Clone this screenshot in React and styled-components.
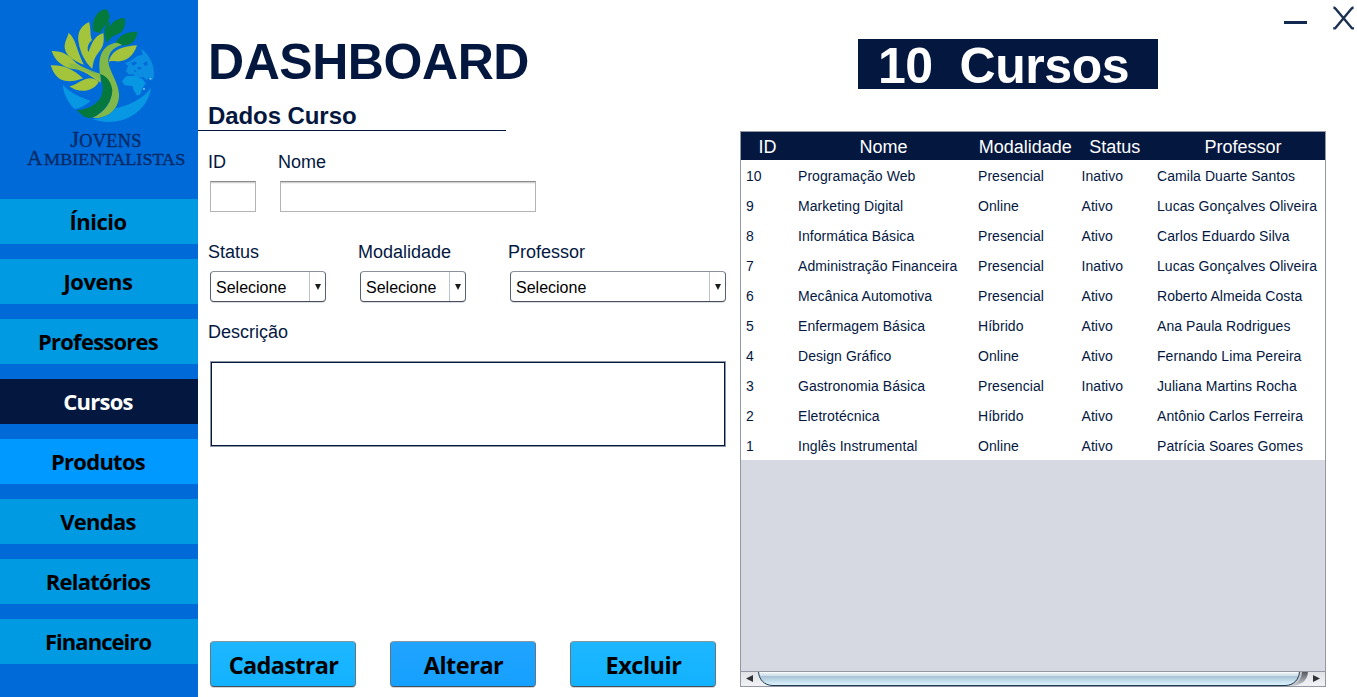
import React from 'react';
import styled, { createGlobalStyle, css } from 'styled-components';

const navy = '#04183f';
const arial = '"Liberation Sans", Arial, sans-serif';
const humanist = '"Open Sans", "Segoe UI", sans-serif';

const GlobalStyle = createGlobalStyle`
  *, *::before, *::after { box-sizing: border-box; }
  body { margin: 0; background: #fff; font-family: ${arial}; color: ${navy}; }
`;

const Window = styled.div`
  display: flex;
  width: 1357px;
  height: 697px;
  overflow: hidden;
  background: #fff;
`;

/* ---------- sidebar ---------- */
const Sidebar = styled.aside`
  width: 198px;
  flex: none;
  background: #006ad9;
`;

const LogoArt = styled.svg`
  display: block;
  width: 198px;
  height: 180px;
  margin-bottom: 19px;
`;

const Nav = styled.nav`
  display: flex;
  flex-direction: column;
  gap: 15px;
`;

const NavItem = styled.a`
  display: flex;
  align-items: center;
  justify-content: center;
  height: 45px;
  padding: 0 2px 2px 0;
  background: ${(p) => p.$bg || '#009ae3'};
  color: ${(p) => (p.$active ? '#fff' : '#000')};
  font: 700 22px/30px ${humanist};
  letter-spacing: ${(p) => p.$spacing ?? -0.75}px;
`;

/* ---------- form ---------- */
const FormPanel = styled.main`
  display: flex;
  flex-direction: column;
  width: 542px;
  flex: none;
  padding-bottom: 10px;
`;

const Title = styled.h1`
  margin: 33px 0 0 10px;
  font-size: 50px;
  line-height: 58px;
  font-weight: 700;
  letter-spacing: -0.45px;
`;

const SectionTitle = styled.h2`
  width: 308px;
  height: 31px;
  margin: 9px 0 0;
  padding: 2px 0 0 10px;
  border-bottom: 1px solid ${navy};
  font-size: 24px;
  line-height: 27px;
  font-weight: 700;
  letter-spacing: -0.08px;
`;

const FieldRow = styled.div`
  display: flex;
  margin: ${(p) => p.$top}px 0 0 10px;
`;

const Field = styled.div`
  display: flex;
  flex-direction: column;
  width: ${(p) => p.$width}px;
  flex: none;
`;

const Label = styled.label`
  height: 20px;
  margin-bottom: ${(p) => p.$gap || 9}px;
  font-size: 18px;
  line-height: 20px;
`;

const TextInput = styled.input`
  width: ${(p) => p.$width}px;
  height: 31px;
  margin: 0 0 0 2px;
  padding: 0 6px;
  border: 1px solid #b4b4b4;
  border-top-color: #8b8b8b;
  box-shadow: inset 0 1px 0 #d0d0d0, inset 0 2px 0 #f1f1f1;
  background: #fff;
  font: 16px ${arial};
  outline: none;
`;

const SelectBox = styled.div`
  display: flex;
  width: ${(p) => p.$width}px;
  height: 31px;
  margin-left: 2px;
  border: 1px solid #596171;
  border-top-color: #8b909b;
  border-bottom-color: #46505f;
  border-radius: 4px;
  box-shadow: 0 1px 0 #dcdcde;
  color: #000;
  font-size: 16px;
  line-height: 31px;
`;

const SelectValue = styled.span`
  flex: 1;
  padding-left: 5px;
`;

const SelectArrow = styled.span`
  display: flex;
  justify-content: center;
  width: 16px;
  padding: 12px 0 0 0;
  border-left: 1px solid #bcc4cb;
  border-radius: 0 3px 3px 0;

  &::before {
    content: '';
    width: 0;
    height: 0;
    border: 3.5px solid transparent;
    border-top: 6px solid #1b1b1b;
    border-bottom: 0;
  }
`;

const TextArea = styled.textarea`
  display: block;
  width: 516px;
  height: 86px;
  margin: 0 0 0 2px;
  padding: 4px;
  resize: none;
  outline: none;
  border: 1px solid #8f96a5;
  border-radius: 0;
  box-shadow: inset 0 0 0 1px ${navy};
  background: #fff;
  font: 16px ${arial};
`;

const Actions = styled.div`
  display: flex;
  gap: 34px;
  margin: auto 0 0 12px;
`;

const ActionButton = styled.button`
  width: 146px;
  height: 46px;
  padding: 1px 0 0 1px;
  border: 1px solid #5f7787;
  border-top-color: #8298a5;
  border-bottom-color: #43525d;
  border-radius: 4px;
  box-shadow: 0 1px 0 #d5d5d8;
  background: ${(p) =>
    p.$hover
      ? 'linear-gradient(#20a4ff, #16a0ff)'
      : 'linear-gradient(#1db7ff, #13b2ff)'};
  color: #000;
  font: 700 23.5px/32px ${humanist};
  letter-spacing: ${(p) => p.$spacing ?? -0.7}px;
`;

/* ---------- right side ---------- */
const ListPanel = styled.section`
  display: flex;
  flex-direction: column;
  flex: 1;
`;

const WindowControls = styled.div`
  display: flex;
  justify-content: flex-end;
  height: 39px;
`;

const ControlsArt = styled.svg`
  width: 77px;
  height: 39px;
`;

const CountBanner = styled.div`
  width: 300px;
  height: 50px;
  margin-left: 118px;
  padding-left: 20px;
  background: ${navy};
  color: #fff;
  font-size: 50px;
  line-height: 54px;
  font-weight: 700;
  letter-spacing: -0.45px;
  white-space: pre;
`;

const TableFrame = styled.div`
  display: flex;
  flex-direction: column;
  width: 586px;
  height: 556px;
  margin-top: 42px;
  border: 1px solid #9396a3;
  background: #d6d9e1;
  overflow: hidden;
`;

const columns = css`
  display: grid;
  grid-template-columns: 52px 180px 103.5px 75.5px 181px;
  width: 592px;
`;

const HeaderRow = styled.div`
  ${columns}
  height: 28px;
  padding-left: 0.5px;
  background: ${navy};
  color: #fff;
  font-size: 18px;
  line-height: 30px;
  text-align: center;
`;

const BodyRow = styled.div`
  ${columns}
  height: 30px;
  background: #fff;
  font-size: 14px;
  line-height: 33px;
  letter-spacing: 0.06px;
`;

const Cell = styled.span`
  padding-left: 5px;
  white-space: nowrap;
`;

const ScrollArt = styled.svg`
  display: block;
  width: 584px;
  height: 15px;
  margin-top: auto;
  flex: none;
`;

const menu = [
  { label: 'Ínicio', spacing: -0.5 },
  { label: 'Jovens', spacing: -0.45 },
  { label: 'Professores' },
  { label: 'Cursos', active: true, bg: navy },
  { label: 'Produtos', bg: '#0099ff' },
  { label: 'Vendas' },
  { label: 'Relatórios' },
  { label: 'Financeiro', spacing: -0.95 },
];

const courses = [
  ['10', 'Programação Web', 'Presencial', 'Inativo', 'Camila Duarte Santos'],
  ['9', 'Marketing Digital', 'Online', 'Ativo', 'Lucas Gonçalves Oliveira'],
  ['8', 'Informática Básica', 'Presencial', 'Ativo', 'Carlos Eduardo Silva'],
  ['7', 'Administração Financeira', 'Presencial', 'Inativo', 'Lucas Gonçalves Oliveira'],
  ['6', 'Mecânica Automotiva', 'Presencial', 'Ativo', 'Roberto Almeida Costa'],
  ['5', 'Enfermagem Básica', 'Híbrido', 'Ativo', 'Ana Paula Rodrigues'],
  ['4', 'Design Gráfico', 'Online', 'Ativo', 'Fernando Lima Pereira'],
  ['3', 'Gastronomia Básica', 'Presencial', 'Inativo', 'Juliana Martins Rocha'],
  ['2', 'Eletrotécnica', 'Híbrido', 'Ativo', 'Antônio Carlos Ferreira'],
  ['1', 'Inglês Instrumental', 'Online', 'Ativo', 'Patrícia Soares Gomes'],
];

function Logo() {
  return (
    <LogoArt viewBox="0 0 594 540">
      {/* globe */}
      <path fill="#0797e3" d="M188 254 C214 282 248 294 272 302 C250 322 232 326 224 327 C202 306 191 280 188 254 Z" />
      <path fill="#0797e3" d="M453 264 C445 322 392 366 326 366 C306 366 290 362 278 358 C306 356 328 346 346 325 C392 316 430 294 453 264 Z" />
      <path fill="#0b8de2" d="M424 146 C450 166 464 196 462 230 L456 242 L449 232 L440 240 L430 231 L412 234 L398 222 L388 224 L378 214 L384 198 L376 190 L396 180 L412 168 L428 164 Z" />
      <path fill="#0797e3" d="M378 229 L404 227 L428 238 L437 250 L428 264 L420 284 L410 286 L400 268 L398 258 L374 256 L366 244 Z" />
      <path fill="#006ad9" d="M392 190 L406 184 L411 190 L400 198 Z M412 202 L422 200 L424 208 L414 208 Z M430 190 L440 184 L444 194 L434 198 Z M400 210 L410 212 L406 217 Z" />
      <circle cx="451" cy="236" r="3" fill="#7bcaf2" />
      <circle cx="432" cy="267" r="3" fill="#7bcaf2" />
      {/* dark leaves */}
      <path fill="#047a3c" d="M280 93 C274 60 290 32 317 27 C331 39 332 56 322 70 C312 79 305 87 301 100 Z" />
      <path fill="#047a3c" d="M314 88 C315 76 322 68 330 65 L328 82 C336 66 351 55 374 54 C378 78 370 96 353 103 C337 108 326 119 321 130 C315 116 312 100 314 88 Z" />
      <path fill="#047a3c" d="M347 128 C358 105 382 94 412 95 C410 120 394 135 375 136 C366 136 356 131 347 128 Z" />
      {/* light leaves */}
      <path fill="#a4c43c" d="M236 128 C230 97 244 76 267 66 C274 87 269 107 276 120 C263 132 261 144 265 157 C274 138 278 109 310 99 C314 127 309 143 295 158 C282 174 279 190 277 207 C255 186 241 158 236 128 Z" />
      <path fill="#a4c43c" d="M206 98 C230 120 226 143 252 194 C224 184 197 168 194 143 C193 126 201 117 206 98 Z" />
      <path fill="#a4c43c" d="M155 153 C184 152 207 165 220 181 C233 196 254 204 277 217 L301 222 L302 248 C276 232 250 209 220 207 C190 202 164 183 155 153 Z" />
      <path fill="#a4c43c" d="M152 196 C184 194 216 203 249 235 C223 246 198 246 181 238 C166 229 158 213 152 196 Z" />
      <path fill="#a4c43c" d="M208 259 C228 257 242 238 270 235 C283 235 290 239 296 246 C282 273 239 283 208 259 Z" />
      <path fill="#a4c43c" d="M327 185 C332 159 354 139 411 136 C400 171 376 187 347 184 C338 183 333 182 327 185 Z" />
      {/* trunk */}
      <path fill="#80b84a" d="M300 222 C293 169 306 136 348 128 C356 129 362 132 366 135 C336 143 321 165 326 192 C332 219 355 249 357 281 C360 325 323 357 278 354 C319 332 340 301 334 264 C327 239 316 229 300 222 Z" />
      <path fill="#80b84a" d="M205 190 C240 193 270 212 300 221 L302 244 C278 224 247 207 213 205 Z" opacity=".75" />
      <path fill="#04783d" d="M301 222 C322 229 335 248 337 272 C334 310 302 346 270 354 C253 353 241 343 231 331 C278 326 306 302 308 270 C309 251 303 238 301 222 Z" />
      <g fill="#052b68" stroke="#052b68" strokeWidth="1.2" fontFamily="'Liberation Serif', 'Times New Roman', serif">
        <text y="441" fontSize="55">
          <tspan x="211" fontSize="68">J</tspan>
          <tspan x="238" textLength="186" lengthAdjust="spacing">OVENS</tspan>
        </text>
        <text y="495" fontSize="52">
          <tspan x="81" fontSize="64">A</tspan>
          <tspan x="132" textLength="424" lengthAdjust="spacingAndGlyphs">MBIENTALISTAS</tspan>
        </text>
      </g>
    </LogoArt>
  );
}

function ScrollBar() {
  return (
    <ScrollArt viewBox="0 0 584 15">
      <defs>
        <linearGradient id="thumb" x1="0" y1="0" x2="0" y2="1">
          <stop offset="0" stopColor="#f4f8fb" />
          <stop offset=".3" stopColor="#d6e3ed" />
          <stop offset=".38" stopColor="#a9c2d5" />
          <stop offset=".7" stopColor="#c6dfed" />
          <stop offset="1" stopColor="#e0f5ff" />
        </linearGradient>
        <linearGradient id="track" x1="0" y1="0" x2="0" y2="1">
          <stop offset="0" stopColor="#dfe1e5" />
          <stop offset="1" stopColor="#f1f2f5" />
        </linearGradient>
        <linearGradient id="shade" x1="0" y1="0" x2="0" y2="1">
          <stop offset="0" stopColor="#4d5157" />
          <stop offset="1" stopColor="#cfd1d5" />
        </linearGradient>
      </defs>
      <rect width="584" height="15" fill="url(#track)" />
      <path d="M552 0H567C567 8 562 14 551 15H545Z" fill="url(#shade)" />
      <path d="M555 0H561C561 8 556 14 547 15H540Z" fill="#c7cbd2" />
      <path d="M17.5 0C17.5 8 23 14.5 32 14.5H544C553 14.5 558.5 8 558.5 0Z" fill="url(#thumb)" stroke="#213b50" />
      <path d="M0 .5H584" stroke="#9598a4" />
      <path d="M19 1.5H557" stroke="#f8fbfd" />
      <path d="M5 7.5L12 4V11Z" fill="#303236" />
      <path d="M579 7.5L572 4V11Z" fill="#303236" />
    </ScrollArt>
  );
}

function Select({ label, width, fieldWidth }) {
  return (
    <Field $width={fieldWidth}>
      <Label>{label}</Label>
      <SelectBox $width={width}>
        <SelectValue>Selecione</SelectValue>
        <SelectArrow />
      </SelectBox>
    </Field>
  );
}

export default function App() {
  return (
    <>
      <GlobalStyle />
      <Window>
        <Sidebar>
          <Logo />
          <Nav>
            {menu.map((m) => (
              <NavItem key={m.label} $active={m.active} $bg={m.bg} $spacing={m.spacing}>
                {m.label}
              </NavItem>
            ))}
          </Nav>
        </Sidebar>

        <FormPanel>
          <Title>DASHBOARD</Title>
          <SectionTitle>Dados Curso</SectionTitle>
          <FieldRow $top={21}>
            <Field $width={70}>
              <Label>ID</Label>
              <TextInput $width={46} />
            </Field>
            <Field $width={260}>
              <Label>Nome</Label>
              <TextInput $width={256} />
            </Field>
          </FieldRow>
          <FieldRow $top={30}>
            <Select label="Status" width={116} fieldWidth={150} />
            <Select label="Modalidade" width={106} fieldWidth={150} />
            <Select label="Professor" width={216} fieldWidth={220} />
          </FieldRow>
          <FieldRow $top={20}>
            <Field $width={520}>
              <Label $gap={19}>Descrição</Label>
              <TextArea />
            </Field>
          </FieldRow>
          <Actions>
            <ActionButton>Cadastrar</ActionButton>
            <ActionButton $hover $spacing={-0.5}>Alterar</ActionButton>
            <ActionButton $spacing={-0.5}>Excluir</ActionButton>
          </Actions>
        </FormPanel>

        <ListPanel>
          <WindowControls>
            <ControlsArt viewBox="0 0 77 39">
              <path d="M4 22.5H27" stroke="#132a50" strokeWidth="3" />
              <path d="M53.4 7.8H54.6L55.6 8.8L72 28.2L74 28.4M73.6 7.8H72.4L71.4 8.8L55.2 28.2L53.2 28.4" fill="none" stroke="#1c3050" strokeWidth="2.4" strokeLinejoin="round" />
            </ControlsArt>
          </WindowControls>
          <CountBanner>{'10  Cursos'}</CountBanner>
          <TableFrame>
            <HeaderRow>
              <span>ID</span>
              <span>Nome</span>
              <span>Modalidade</span>
              <span>Status</span>
              <span>Professor</span>
            </HeaderRow>
            {courses.map((row) => (
              <BodyRow key={row[0]}>
                {row.map((value, i) => (
                  <Cell key={i}>{value}</Cell>
                ))}
              </BodyRow>
            ))}
            <ScrollBar />
          </TableFrame>
        </ListPanel>
      </Window>
    </>
  );
}
